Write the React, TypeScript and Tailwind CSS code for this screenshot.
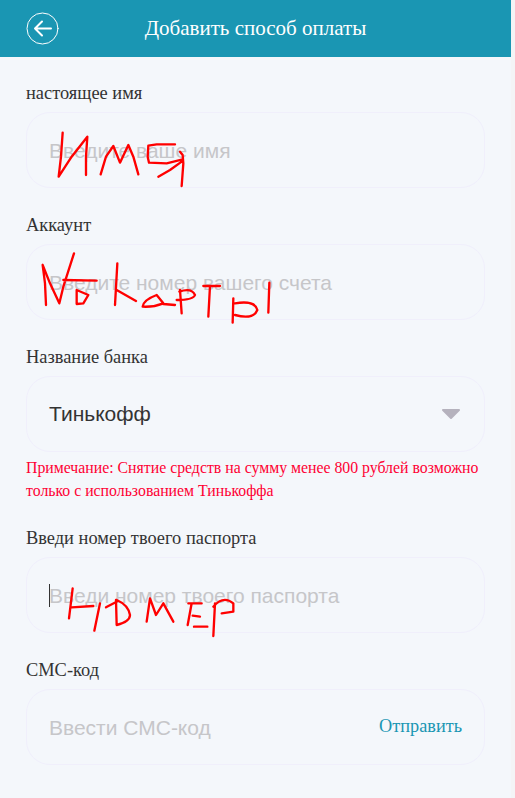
function Field({
  label,
  placeholder,
  caret,
  action,
}: {
  label: string;
  placeholder: string;
  caret?: boolean;
  action?: string;
}) {
  return (
    <div className="mb-[11px]">
      <label className="block h-[45px] pt-[14px] text-[18.4px] leading-[24px] text-[#333]">{label}</label>
      <div className="relative flex h-[76px] items-center rounded-[24px] border border-[#f0effb] pl-[22px] pr-[22px]">
        <input
          placeholder={placeholder}
          className="min-w-0 flex-1 bg-transparent pt-[2px] font-['Liberation_Sans',sans-serif] text-[21px] outline-none placeholder:text-[#c6c6c9]"
        />
        {caret && <span className="absolute left-[22px] top-[26px] h-[23px] w-px bg-[#333]" />}
        {action && <span className="text-[18.3px] text-[#1a96b3]">{action}</span>}
      </div>
    </div>
  );
}

function Scribbles() {
  return (
    <svg
      viewBox="0 0 1545 2394"
      className="pointer-events-none absolute left-0 top-0 h-[798px] w-[515px]"
      fill="none"
      stroke="#ff0000"
      strokeWidth="7"
      strokeLinecap="round"
      strokeLinejoin="round"
    >
      <path d="M188 398L183 470L176 530L215 470L262 410L258 470L258 525" />
      <path d="M302 523L318 470L340 438L360 488L385 435L400 470L415 523" />
      <path d="M525 433L470 433L445 437L443 470L447 488L500 490L548 478M548 465L540 455L548 465L550 490L545 558M545 485L510 510L475 530" />
      <g transform="translate(0 600)">
        <path d="M128 195L135 250L138 315M128 195L150 250L178 310L190 260L222 160M190 240L290 242" />
        <path d="M230 270L265 285L250 310L230 312Z" />
        <path d="M352 190L345 315M350 270L408 303" />
        <path d="M428 320Q430 300 470 285L490 310Q460 322 428 320M490 312L525 315" />
        <path d="M540 270L545 340M538 275Q575 262 585 285Q580 300 530 300" />
        <path d="M610 258L660 258M630 258L625 350" />
        <path d="M700 295L698 368M705 345Q760 360 772 330Q765 300 705 310M808 248L805 338" />
      </g>
      <g transform="translate(0 1560)">
        <path d="M218 205L207 295M215 262L280 258M300 250L283 332" />
        <path d="M318 262L350 245M348 240L350 315Q390 305 390 285Q385 255 350 240" />
        <path d="M440 305L450 235L468 285L490 250L520 305" />
        <path d="M575 250L563 315M565 250L605 250M578 287L600 290M582 320L622 320" />
        <path d="M645 250L640 348M640 260Q670 225 700 250L700 275L665 280" />
      </g>
    </svg>
  );
}

export default function App() {
  return (
    <div className="relative flex h-[798px] w-[515px] overflow-hidden bg-[#f4f4f6] font-['Liberation_Serif',serif]">
      <div className="w-[511px] bg-[#f4f7fb]">
        <header className="grid h-[57px] grid-cols-[1fr_auto_1fr] items-center bg-[#1a96b3] pl-[26px] text-[21px] text-white">
          <svg width="33" height="33" viewBox="0 0 33 33" fill="none" stroke="white" strokeLinecap="round" strokeLinejoin="round">
            <circle cx="16.5" cy="16.5" r="15.5" />
            <path d="M9 16.5H25M16 9.5L9 16.5L16 23.5" strokeWidth="2" />
          </svg>
          <h1 className="-ml-[26px]">Добавить способ оплаты</h1>
          <span />
        </header>
        <div className="pl-[26px] pr-[26px] pt-[10px]">
          <Field label="настоящее имя" placeholder="Введите ваше имя" />
          <Field label="Аккаунт" placeholder="Введите номер вашего счета" />
          <div>
            <label className="block h-[45px] pt-[14px] text-[18.4px] leading-[24px] text-[#333]">Название банка</label>
            <div className="flex h-[76px] items-center justify-between rounded-[24px] border border-[#f0effb] pl-[22px] pr-[23px] font-['Liberation_Sans',sans-serif] text-[21px] text-[#333]">
              <span>Тинькофф</span>
              <svg width="20" height="12" viewBox="0 0 20 12">
                <path d="M2 2H18L10 10Z" fill="#b5b2bd" stroke="#b5b2bd" strokeWidth="2" strokeLinejoin="round" />
              </svg>
            </div>
            <p className="mb-[10px] mt-[4px] h-[46px] text-[15.8px] leading-[23px] text-[#ff0033]">
              Примечание: Снятие средств на сумму менее 800 рублей возможно только с использованием Тинькоффа
            </p>
          </div>
          <Field label="Введи номер твоего паспорта" placeholder="Введи номер твоего паспорта" caret />
          <Field label="СМС-код" placeholder="Ввести СМС-код" action="Отправить" />
        </div>
      </div>
      <Scribbles />
    </div>
  );
}
